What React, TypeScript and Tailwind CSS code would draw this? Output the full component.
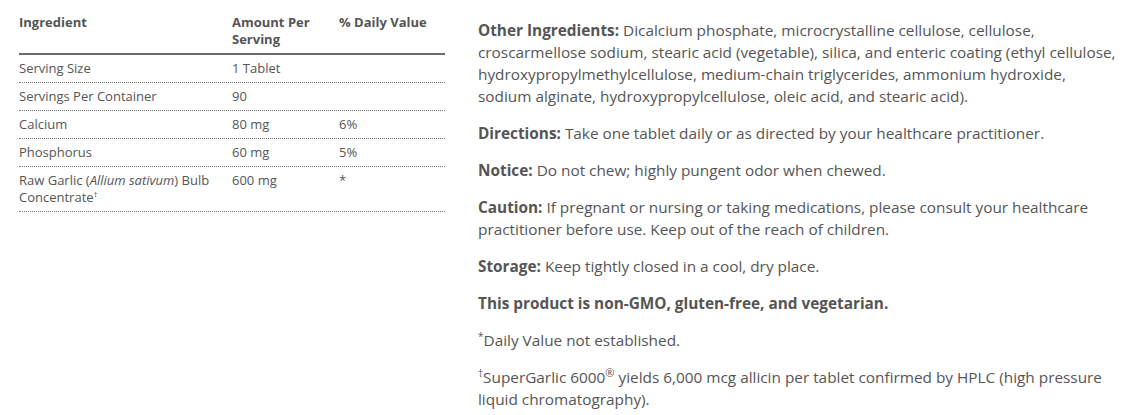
import React from "react";

const rows: { name: React.ReactNode; amt: string; dv: string }[] = [
  { name: "Serving Size", amt: "1 Tablet", dv: "" },
  { name: "Servings Per Container", amt: "90", dv: "" },
  { name: "Calcium", amt: "80 mg", dv: "6%" },
  { name: "Phosphorus", amt: "60 mg", dv: "5%" },
  {
    name: (
      <>
        Raw Garlic (<i>Allium sativum</i>) Bulb
        <br />
        Concentrate<span className="relative -top-[5px] text-[8px] leading-none">†</span>
      </>
    ),
    amt: "600 mg",
    dv: "*",
  },
];

export default function App() {
  return (
    <div
      className="w-[1128px] h-[415px] bg-white text-[#555] flex items-start overflow-hidden"
      style={{ fontFamily: '"Open Sans", "Liberation Sans", sans-serif' }}
    >
      <div className="w-[426px] shrink-0 ml-[19px] mt-[14px] text-[13px]">
        <div className="flex font-bold leading-[17px] pb-[5px] border-b-2 border-[#6b6b6b]">
          <div className="w-[213px]">Ingredient</div>
          <div className="w-[107px]">
            Amount Per
            <br />
            Serving
          </div>
          <div className="flex-1">% Daily Value</div>
        </div>
        {rows.map((r, i) => (
          <div key={i} className="flex leading-[17px] pt-[5px] pb-[5px] border-b border-dotted border-[#777]">
            <div className="w-[213px] whitespace-nowrap">{r.name}</div>
            <div className="w-[107px]">{r.amt}</div>
            <div className="flex-1">{r.dv}</div>
          </div>
        ))}
      </div>
      <div className="ml-[33px] mt-[19px] w-[650px] shrink-0 text-[15.35px] leading-[22px] flex flex-col gap-[15px] whitespace-nowrap">
        <p>
          <b>Other Ingredients:</b> Dicalcium phosphate, microcrystalline cellulose, cellulose,
          <br />
          croscarmellose sodium, stearic acid (vegetable), silica, and enteric coating (ethyl cellulose,
          <br />
          hydroxypropylmethylcellulose, medium-chain triglycerides, ammonium hydroxide,
          <br />
          sodium alginate, hydroxypropylcellulose, oleic acid, and stearic acid).
        </p>
        <p>
          <b>Directions:</b> Take one tablet daily or as directed by your healthcare practitioner.
        </p>
        <p>
          <b>Notice:</b> Do not chew; highly pungent odor when chewed.
        </p>
        <p>
          <b>Caution:</b> If pregnant or nursing or taking medications, please consult your healthcare
          <br />
          practitioner before use. Keep out of the reach of children.
        </p>
        <p>
          <b>Storage:</b> Keep tightly closed in a cool, dry place.
        </p>
        <p>
          <b>This product is non-GMO, gluten-free, and vegetarian.</b>
        </p>
        <p>
          <span className="relative -top-[6px] text-[10px] leading-none">*</span>Daily Value not established.
        </p>
        <p>
          <span className="relative -top-[6px] text-[10px] leading-none">†</span>SuperGarlic 6000
          <span className="relative -top-[6px] text-[11px] leading-none">®</span> yields 6,000 mcg allicin per tablet confirmed by HPLC (high pressure
          <br />
          liquid chromatography).
        </p>
      </div>
    </div>
  );
}
